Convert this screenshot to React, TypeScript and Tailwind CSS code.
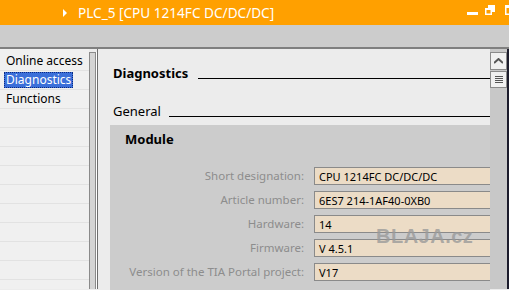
import React from 'react';

const rows = [
  { label: 'Short designation:', value: 'CPU 1214FC DC/DC/DC' },
  { label: 'Article number:', value: '6ES7 214-1AF40-0XB0' },
  { label: 'Hardware:', value: '14' },
  { label: 'Firmware:', value: 'V 4.5.1' },
  { label: 'Version of the TIA Portal project:', value: 'V17' },
];

const navItems = ['Online access', 'Diagnostics', 'Functions', '', '', '', '', '', '', '', '', '', ''];

const App = () => {
  return (
    <div className="relative w-[509px] h-[290px] overflow-hidden bg-[#ececec] text-black" style={{ fontFamily: '"Noto Sans", sans-serif' }}>
      {/* Title bar */}
      <div className="h-[25px] bg-[#ffa000] flex items-center relative">
        <svg className="ml-[63px]" width="4" height="8" viewBox="0 0 4 8">
          <path d="M0 0 L4 4 L0 8 Z" fill="#fff" />
        </svg>
        <span className="ml-[11px] text-white text-[13.6px] leading-none">PLC_5 [CPU 1214FC DC/DC/DC]</span>
        <div className="absolute right-0 top-0 h-full flex items-start">
          <div className="mt-[12px] w-[11px] h-[3px] bg-white mr-[7px]" />
          <svg className="mt-[5px] mr-[10px]" width="10" height="10" viewBox="0 0 10 10">
            <rect x="3" y="0" width="7" height="7" fill="#fff" />
            <rect x="0" y="3" width="7" height="7" fill="#fff" />
            <rect x="1.5" y="5" width="4" height="3.5" fill="#ffa000" />
          </svg>
          <svg className="mt-[5px]" width="4" height="10" viewBox="0 0 4 10">
            <rect x="0" y="0" width="4" height="10" fill="#fff" />
            <rect x="1.5" y="3" width="3" height="5.5" fill="#ffa000" />
          </svg>
        </div>
      </div>

      {/* Toolbar strip */}
      <div className="h-[24px] bg-[#cccccc] border-b-2 border-[#7f7f7f]" />

      {/* Body */}
      <div className="flex h-[240px]">
        {/* Left nav */}
        <div className="w-[89px] bg-[#f0f0f0] pt-[3px]">
          {navItems.map((item, i) => (
            <div key={i} className="h-[19px] border-b border-[#e2e2e2] flex items-center pl-[4px] text-[12px] leading-none">
              {item === 'Diagnostics' ? (
                <span className="bg-[#3b6fd9] text-white px-[2px] py-[2px] outline-1 outline-dotted outline-[#0a2a80] -outline-offset-1">{item}</span>
              ) : (
                <span className="px-[2px]">{item}</span>
              )}
            </div>
          ))}
        </div>

        {/* Splitter */}
        <div className="w-[8px] pt-[3px] flex">
          <div className="w-[7px] h-full bg-[#d4d4d4] border border-[#8a8a8a] border-b-0" />
          <div className="w-[1px] bg-white" />
        </div>

        {/* Main content */}
        <div className="flex-1 border-l border-[#6e6e6e] relative">
          <div className="pl-[15px] pt-[18px] flex items-end">
            <span className="font-bold text-[13px] leading-none">Diagnostics</span>
            <div className="flex-1 h-px bg-black ml-[10px] mb-[1px]" />
          </div>
          <div className="pl-[15px] pt-[25px] flex items-end">
            <span className="text-[13px] leading-none">General</span>
            <div className="flex-1 h-px bg-black ml-[8px] mb-[1px]" />
          </div>
          <div className="ml-[12px] mt-[7px] bg-[#cccccc] h-[200px] pl-[15px] pt-[8px]">
            <div className="font-bold text-[13px] leading-none">Module</div>
            <div className="mt-[21px] flex flex-col gap-[6px]">
              {rows.map((r) => (
                <div key={r.label} className="flex items-center h-[18px]">
                  <div className="w-[179px] text-right text-[11.5px] text-[#8d8d8d] leading-none whitespace-nowrap">{r.label}</div>
                  <div className="ml-[10px] flex-1 h-[18px] bg-[#ecdcc6] border border-[#8a8a8a] border-r-0 flex items-center pl-[4px] text-[11px] leading-none">
                    {r.value}
                  </div>
                </div>
              ))}
            </div>
          </div>
          <div className="absolute left-[278px] top-[177px] text-[20px] font-bold text-[#9a9a9a]/80 tracking-[0.5px] leading-none" style={{ fontFamily: '"Liberation Sans", sans-serif' }}>
            BLAJA.cz
          </div>
        </div>

        {/* Scrollbar */}
        <div className="w-[17px] bg-[#c8c8c8] pt-[3px] flex flex-col items-center gap-[1px]">
          <div className="w-[17px] h-[18px] bg-[#f0f0f0] border border-[#8a8a8a] flex items-center justify-center">
            <svg width="9" height="6" viewBox="0 0 9 6">
              <path d="M0 5 L4.5 1 L9 5" stroke="#555" strokeWidth="2" fill="none" />
            </svg>
          </div>
          <div className="w-[17px] h-[17px] bg-[#f0f0f0] border border-[#8a8a8a] flex flex-col items-center justify-center gap-[1px]">
            <div className="w-[8px] h-px bg-[#555]" />
            <div className="w-[8px] h-px bg-[#555]" />
            <div className="w-[8px] h-px bg-[#555]" />
            <div className="w-[8px] h-px bg-[#555]" />
          </div>
        </div>
        <div className="w-[2px] bg-[#1c1c2c]" />
      </div>
    </div>
  );
};

export default App;
